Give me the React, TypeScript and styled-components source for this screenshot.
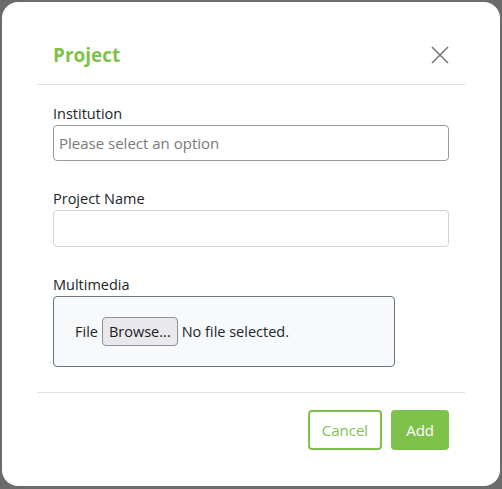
import React from 'react';
import styled, { createGlobalStyle } from 'styled-components';

const GREEN = '#7fc24b';

const GlobalStyle = createGlobalStyle`
  html, body {
    margin: 0;
    padding: 0;
    background: #6b6b6b;
    font-family: 'Open Sans', 'Noto Sans', sans-serif;
  }
  * { box-sizing: border-box; }
`;

// Backdrop that fills the window
const Backdrop = styled.div`
  width: 502px;
  height: 489px;
  padding: 2px 2px 3px 2px;
  background: #6b6b6b;
`;

// The dialog card
const Dialog = styled.div`
  width: 498px;
  height: 484px;
  background: #fff;
  border-radius: 16px;
  padding: 0 35px;
  display: flex;
  flex-direction: column;
`;

const Header = styled.div`
  display: flex;
  align-items: center;
  justify-content: space-between;
  padding: 40px 16px 16px 16px;
  border-bottom: 1px solid #dee2e6;
`;

const Title = styled.h2`
  margin: 0;
  font-size: 19px;
  line-height: 26px;
  font-weight: 700;
  color: ${GREEN};
`;

const CloseButton = styled.button`
  border: none;
  background: transparent;
  padding: 0;
  width: 18px;
  height: 18px;
  display: flex;
  align-items: center;
  justify-content: center;
  cursor: pointer;
`;

const Body = styled.div`
  padding: 18px 16px 25px 16px;
  border-bottom: 1px solid #dee2e6;
`;

const Field = styled.div<{ $last?: boolean }>`
  margin-bottom: ${p => (p.$last ? '0' : '27px')};
`;

const Label = styled.label`
  display: block;
  font-size: 14.5px;
  line-height: 22px;
  color: #212529;
`;

const TextInput = styled.input<{ $dark?: boolean; $h: number }>`
  display: block;
  width: 100%;
  height: ${p => p.$h}px;
  padding: 0 5px;
  font-family: inherit;
  font-size: 15px;
  color: #212529;
  border: 1px solid ${p => (p.$dark ? '#9a9a9a' : '#ced4da')};
  border-radius: 4px;
  outline: none;

  &::placeholder {
    color: #7a7a7a;
  }
`;

const FileBox = styled.div`
  width: 342px;
  height: 71px;
  background: #f8f9fa;
  border: 1px solid #6c757d;
  border-radius: 4px;
  padding: 0 21px;
  display: flex;
  align-items: center;
  gap: 4px;
  font-size: 14.5px;
  color: #212529;
`;

const BrowseButton = styled.span`
  display: inline-flex;
  align-items: center;
  height: 29px;
  padding: 0 6px;
  background: #e9e9ed;
  border: 1px solid #8f8f9d;
  border-radius: 4px;
  font-size: 14.5px;
  color: #1b1b1b;
`;

const Footer = styled.div`
  display: flex;
  justify-content: flex-end;
  gap: 9px;
  padding: 17px 16px 0 16px;
`;

const Button = styled.button<{ $solid?: boolean }>`
  height: 40px;
  padding: 0 ${p => (p.$solid ? '13px' : '12px')};
  font-family: inherit;
  font-size: 15px;
  border-radius: 4px;
  border: 2px solid ${GREEN};
  background: ${p => (p.$solid ? GREEN : '#fff')};
  color: ${p => (p.$solid ? '#fff' : GREEN)};
  cursor: pointer;
`;

export default function App() {
  return (
    <>
      <GlobalStyle />
      <Backdrop>
        <Dialog>
          <Header>
            <Title>Project</Title>
            <CloseButton aria-label="Close">
              <svg width="18" height="18" viewBox="0 0 18 18">
                <path d="M1 1L17 17M17 1L1 17" stroke="#777" strokeWidth="1.6" />
              </svg>
            </CloseButton>
          </Header>
          <Body>
            <Field>
              <Label>Institution</Label>
              <TextInput $dark $h={36} placeholder="Please select an option" />
            </Field>
            <Field>
              <Label>Project Name</Label>
              <TextInput $h={37} />
            </Field>
            <Field $last>
              <Label>Multimedia</Label>
              <FileBox>
                <span>File</span>
                <BrowseButton>Browse...</BrowseButton>
                <span>No file selected.</span>
              </FileBox>
            </Field>
          </Body>
          <Footer>
            <Button>Cancel</Button>
            <Button $solid>Add</Button>
          </Footer>
        </Dialog>
      </Backdrop>
    </>
  );
}
